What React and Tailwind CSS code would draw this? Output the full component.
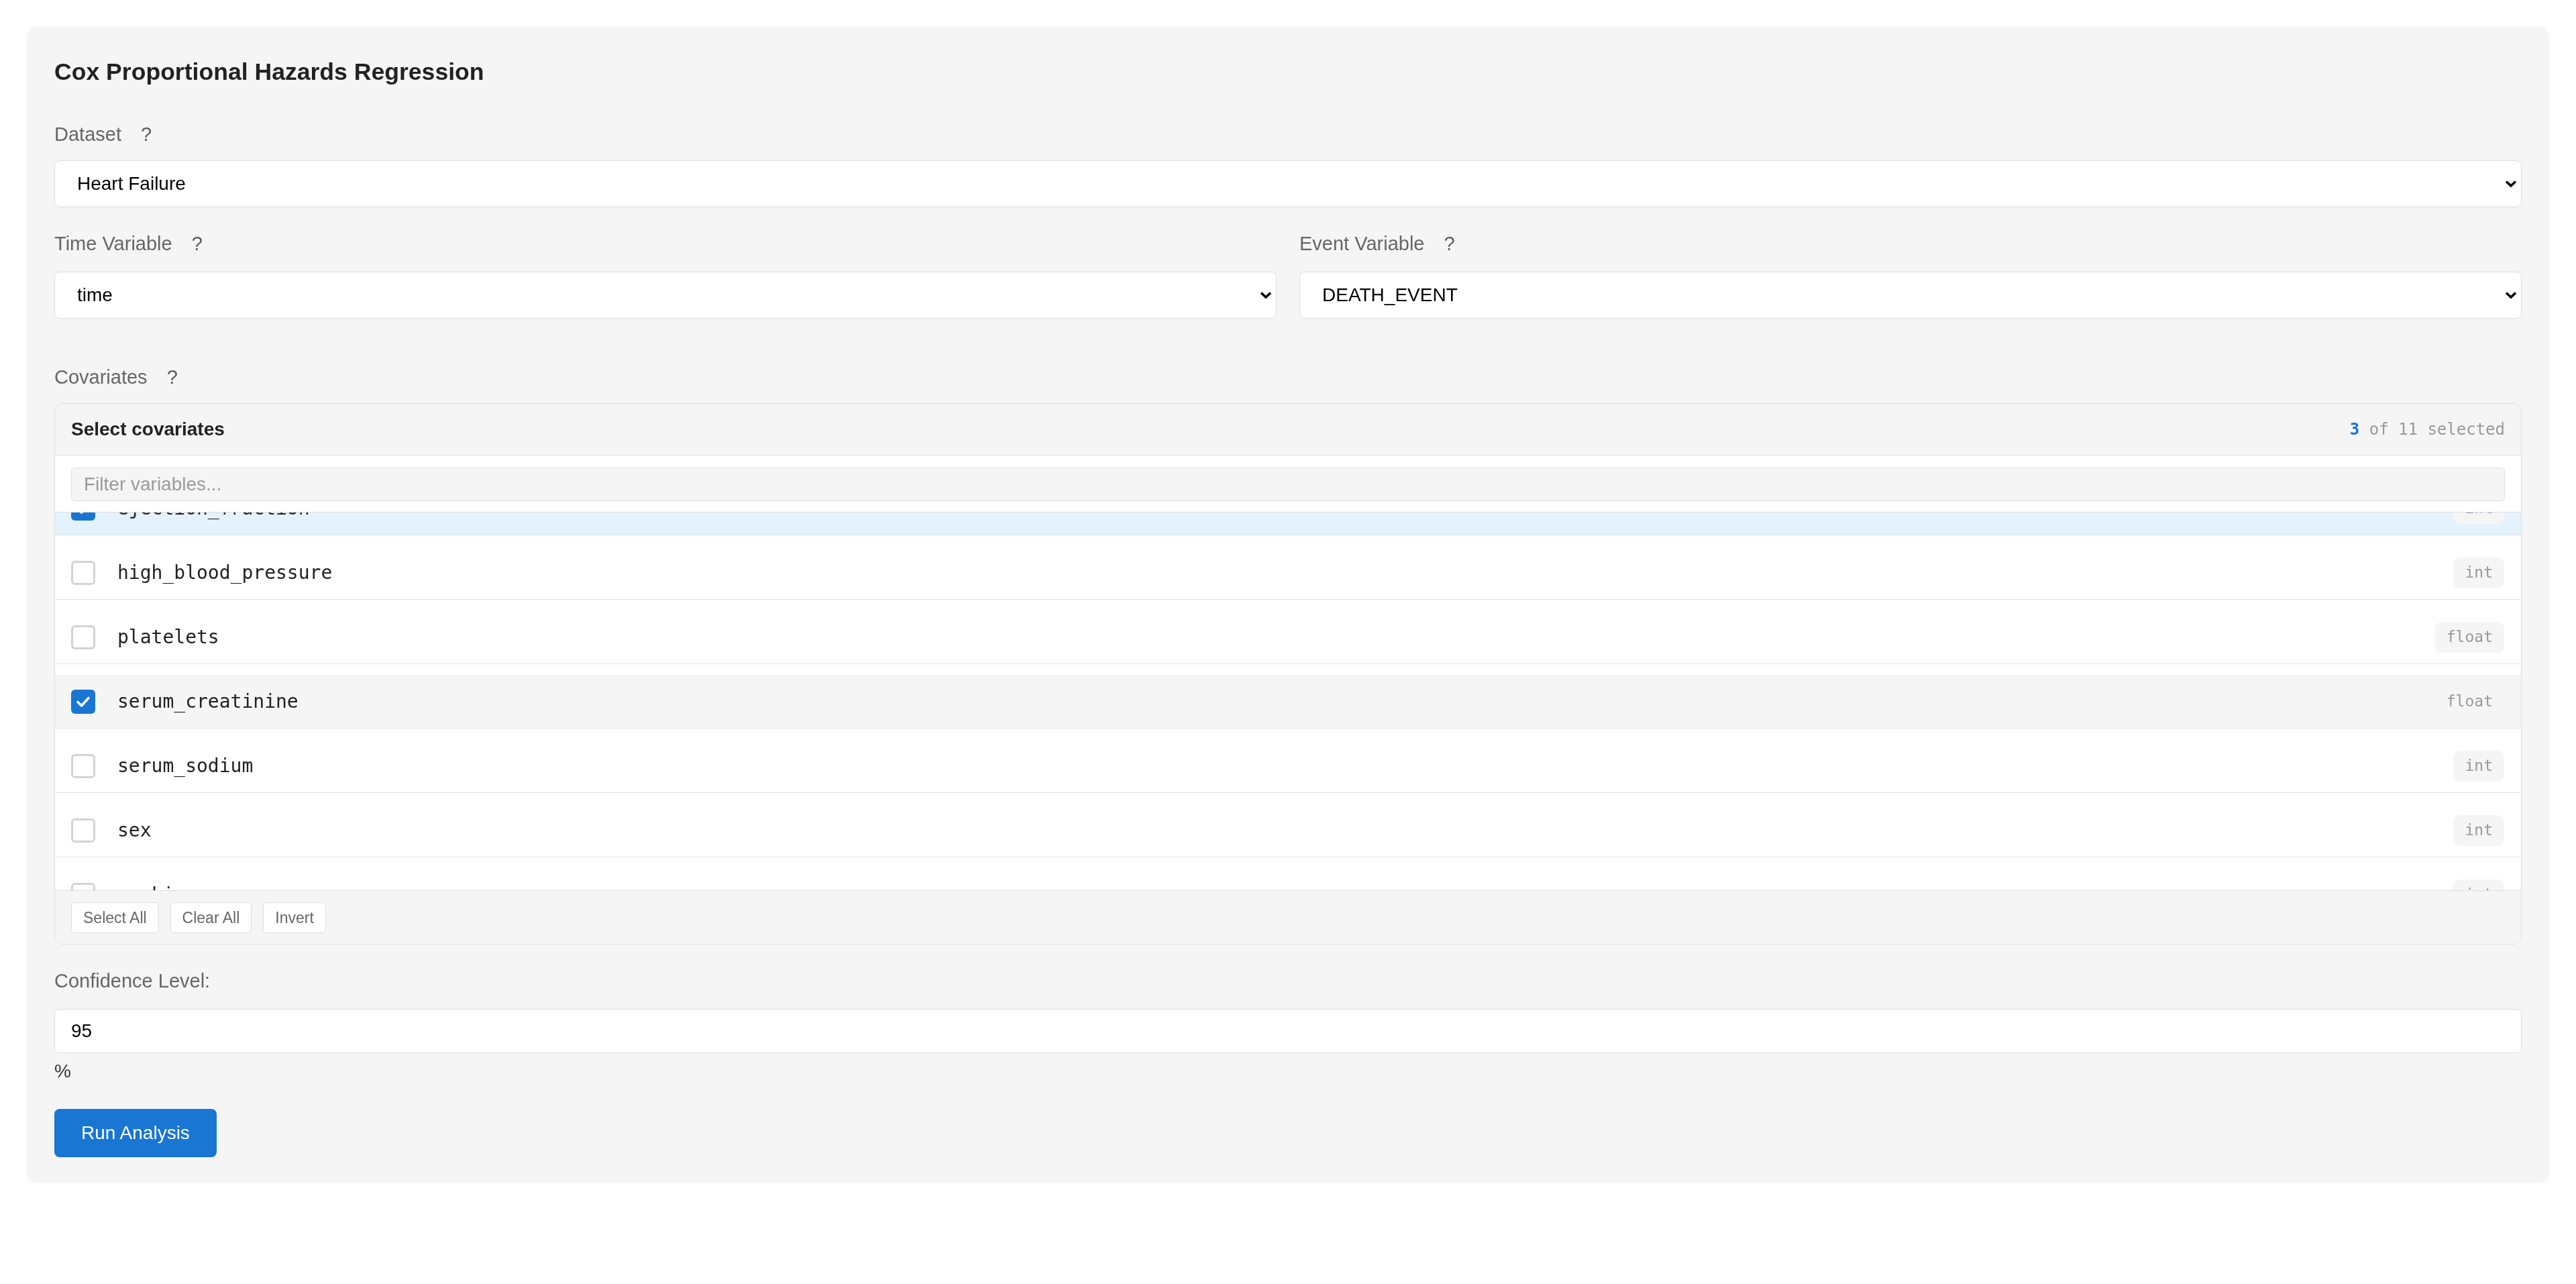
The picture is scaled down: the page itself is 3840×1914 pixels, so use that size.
import React, { useLayoutEffect, useRef, useState } from 'react';

const variables = [
  { name: 'age', type: 'float' },
  { name: 'anaemia', type: 'int' },
  { name: 'creatinine_phosphokinase', type: 'int' },
  { name: 'diabetes', type: 'int' },
  { name: 'ejection_fraction', type: 'int' },
  { name: 'high_blood_pressure', type: 'int' },
  { name: 'platelets', type: 'float' },
  { name: 'serum_creatinine', type: 'float' },
  { name: 'serum_sodium', type: 'int' },
  { name: 'sex', type: 'int' },
  { name: 'smoking', type: 'int' },
];

const FieldLabel = ({ children, help }) => (
  <label className="flex items-center text-[29px] leading-[34px] text-[#666]">
    {children}
    {help && <span className="ml-[29px] text-[#5a5a5a]">?</span>}
  </label>
);

const Chevron = () => (
  <svg
    width="18"
    height="11"
    viewBox="0 0 18 11"
    className="pointer-events-none absolute right-[7px] top-1/2 -translate-y-1/2"
  >
    <path d="M2 2 L9 8.5 L16 2" fill="none" stroke="#000" strokeWidth="3.6" />
  </svg>
);

const Select = ({ value, options }) => (
  <div className="relative">
    <select
      defaultValue={value}
      className="h-[70px] w-full appearance-none rounded-[8px] border border-[#dcdcdc] bg-white pl-[33px] pr-[40px] text-[28px] text-black outline-none"
    >
      {options.map((o) => (
        <option key={o} value={o}>
          {o}
        </option>
      ))}
    </select>
    <Chevron />
  </div>
);

const Checkbox = ({ checked }) =>
  checked ? (
    <span className="flex h-[36px] w-[36px] shrink-0 items-center justify-center rounded-[6px] bg-[#1976d2]">
      <svg width="22" height="18" viewBox="0 0 22 18">
        <path d="M3 9.5 L8.5 15 L19 3.5" fill="none" stroke="#fff" strokeWidth="3.6" strokeLinecap="round" strokeLinejoin="round" />
      </svg>
    </span>
  ) : (
    <span className="h-[36px] w-[36px] shrink-0 rounded-[6px] border-[3px] border-[#d3d3d3] bg-white" />
  );

export default function App() {
  const [selected, setSelected] = useState(['age', 'ejection_fraction', 'serum_creatinine']);
  const [hovered, setHovered] = useState('serum_creatinine');
  const listRef = useRef(null);

  useLayoutEffect(() => {
    if (listRef.current) listRef.current.scrollTop = 446;
  }, []);

  const toggle = (name) =>
    setSelected((s) => (s.includes(name) ? s.filter((n) => n !== name) : [...s, name]));

  return (
    <div className="min-h-screen bg-white pt-[40px] font-['Liberation_Sans',Arial,sans-serif]">
      <div className="mx-[40px] rounded-[14px] bg-[#f5f5f5] px-[41px] pb-[38px] pt-[46px]">
        <h2 className="text-[35.6px] font-bold leading-[43px] text-[#222]">Cox Proportional Hazards Regression</h2>

        <div className="mt-[54px]">
          <FieldLabel help>Dataset</FieldLabel>
          <div className="mt-[22px]">
            <Select value="Heart Failure" options={['Heart Failure', 'Lung Cancer', 'Veterans']} />
          </div>
        </div>

        <div className="mt-[37px] grid grid-cols-2 gap-[34px]">
          <div>
            <FieldLabel help>Time Variable</FieldLabel>
            <div className="mt-[25px]">
              <Select value="time" options={['time', 'age']} />
            </div>
          </div>
          <div>
            <FieldLabel help>Event Variable</FieldLabel>
            <div className="mt-[25px]">
              <Select value="DEATH_EVENT" options={['DEATH_EVENT', 'sex']} />
            </div>
          </div>
        </div>

        <div className="mt-[70px]">
          <FieldLabel help>Covariates</FieldLabel>
          <div className="mt-[22px] overflow-hidden rounded-[12px] border border-[#dedede]">
            <div className="flex h-[77px] items-center justify-between border-b border-[#dedede] bg-[#f5f5f5] px-[24px]">
              <span className="text-[28px] font-bold text-[#222]">Select covariates</span>
              <span className="font-['DejaVu_Sans_Mono',monospace] text-[24px] text-[#999]">
                <span className="font-bold text-[#1976d2]">{selected.length}</span> of {variables.length} selected
              </span>
            </div>
            <div className="border-b border-[#dedede] bg-white px-[24px] pb-[16px] pt-[18px]">
              <input
                type="text"
                placeholder="Filter variables..."
                className="h-[50px] w-full rounded-[6px] border border-[#dcdcdc] bg-[#f5f5f5] pl-[18px] text-[28px] text-[#222] outline-none placeholder:text-[#9a9a9a]"
              />
            </div>
            <div ref={listRef} className="h-[563px] overflow-y-auto bg-white [scrollbar-width:none]">
              {variables.map((v) => {
                const isSel = selected.includes(v.name);
                const bg = hovered === v.name ? 'bg-[#f5f5f5]' : isSel ? 'bg-[#e3f2fd]' : 'bg-white';
                return (
                  <div key={v.name} className="border-b border-[#e3e3e3] pt-[16px]">
                    <div
                      onClick={() => toggle(v.name)}
                      onMouseEnter={() => setHovered(v.name)}
                      onMouseLeave={() => setHovered(null)}
                      className={`flex h-[79px] cursor-pointer items-center pl-[24px] pr-[25px] ${bg}`}
                    >
                      <Checkbox checked={isSel} />
                      <span className="ml-[33px] font-['DejaVu_Sans_Mono',monospace] text-[28px] text-[#222]">{v.name}</span>
                      <span className="ml-auto flex h-[46px] items-center rounded-[10px] bg-[#f5f5f5] px-[17px] font-['DejaVu_Sans_Mono',monospace] text-[23px] text-[#999]">
                        {v.type}
                      </span>
                    </div>
                  </div>
                );
              })}
            </div>
            <div className="flex gap-[17px] border-t border-[#dedede] bg-[#f5f5f5] px-[24px] pb-[16px] pt-[17px]">
              {['Select All', 'Clear All', 'Invert'].map((b) => (
                <button
                  key={b}
                  className="h-[46px] rounded-[6px] border border-[#dcdcdc] bg-white px-[17px] text-[23px] text-[#666]"
                >
                  {b}
                </button>
              ))}
            </div>
          </div>
        </div>

        <div className="mt-[37px]">
          <FieldLabel>Confidence Level:</FieldLabel>
          <input
            type="text"
            defaultValue="95"
            className="mt-[25px] h-[66px] w-full rounded-[8px] border border-[#dcdcdc] bg-white pl-[24px] text-[28px] text-black outline-none"
          />
          <div className="mt-[10px] text-[28px] leading-[34px] text-[#333]">%</div>
        </div>

        <button className="mt-[39px] h-[72px] rounded-[8px] bg-[#1976d2] px-[40px] text-[28px] text-white">
          Run Analysis
        </button>
      </div>
    </div>
  );
}
